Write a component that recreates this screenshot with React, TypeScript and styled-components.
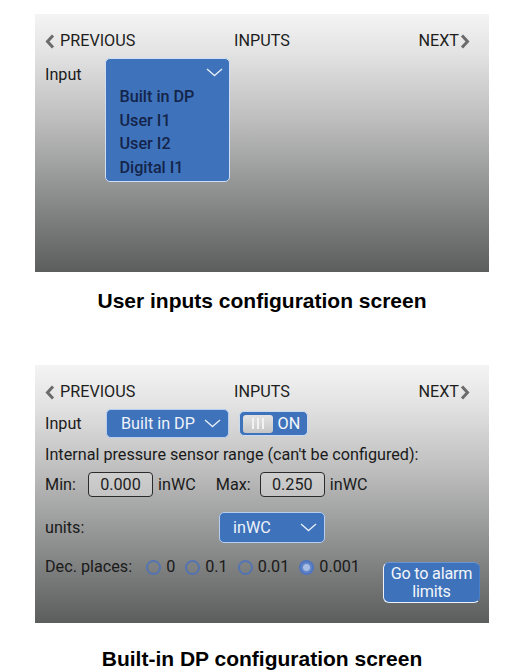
import React from 'react';
import styled, { createGlobalStyle } from 'styled-components';

const GlobalStyle = createGlobalStyle`
  html, body {
    margin: 0;
    padding: 0;
    background: #fff;
  }
  body {
    font-family: Roboto, "Liberation Sans", sans-serif;
  }
`;

const Page = styled.div`
  width: 517px;
  padding-top: 14px;
`;

const Screen = styled.div<{ $mt?: number }>`
  box-sizing: border-box;
  width: 454px;
  height: 258px;
  margin: ${p => p.$mt ?? 0}px 0 0 35px;
  padding: 17px 9px 0 10px;
  display: flex;
  flex-direction: column;
  background: linear-gradient(
    180deg,
    #f4f4f4 0%,
    #e3e3e3 15%,
    #bcbcbc 42%,
    #8d8e8e 70%,
    #5b5e5d 100%
  );
  font-family: Roboto, "Liberation Sans", sans-serif;
  font-size: 16.2px;
  line-height: 20px;
  color: #1a1a1a;
`;

const Caption = styled.div<{ $mt: number }>`
  width: 454px;
  margin: ${p => p.$mt}px 0 0 35px;
  text-align: center;
  font-family: "Liberation Sans", Arial, sans-serif;
  font-weight: bold;
  font-size: 21px;
  line-height: 24px;
  color: #000;
`;

const Header = styled.div`
  display: grid;
  grid-template-columns: 1fr auto 1fr;
  align-items: center;
  height: 20px;
  margin: 0 -9px 0 -10px;
  color: #1e1e1e;
`;

const NavLink = styled.div<{ $side: 'left' | 'right' }>`
  display: flex;
  align-items: center;
  gap: ${p => (p.$side === 'left' ? 5 : 1)}px;
  justify-self: ${p => (p.$side === 'left' ? 'start' : 'end')};
  margin: ${p => (p.$side === 'left' ? '0 0 0 10px' : '0 19px 0 0')};
`;

const Row = styled.div<{ $mt: number; $h?: number; $align?: string }>`
  display: flex;
  align-items: ${p => p.$align ?? 'center'};
  margin-top: ${p => p.$mt}px;
  height: ${p => (p.$h ? `${p.$h}px` : 'auto')};
`;

const Label = styled.div<{ $w?: number; $mt?: number }>`
  width: ${p => (p.$w ? `${p.$w}px` : 'auto')};
  flex-shrink: 0;
  margin-top: ${p => p.$mt ?? 0}px;
`;

const Unit = styled.div<{ $mr?: number }>`
  margin: 0 ${p => p.$mr ?? 0}px 0 5px;
`;

const OpenSelect = styled.div`
  box-sizing: border-box;
  width: 125px;
  height: 124px;
  background: #3e72ba;
  border: 1.5px solid #cfe0f5;
  border-radius: 5px;
  padding: 0 0 0 13.5px;
`;

const OpenTop = styled.div`
  height: 26px;
  display: flex;
  justify-content: flex-end;
  align-items: center;
  padding-right: 6px;
`;

const Option = styled.div`
  height: 23.5px;
  line-height: 23.5px;
  color: #14244a;
  font-weight: 500;
`;

const Select = styled.div<{ $w: number; $h: number; $pl: number }>`
  box-sizing: border-box;
  width: ${p => p.$w}px;
  height: ${p => p.$h}px;
  display: flex;
  align-items: center;
  justify-content: space-between;
  padding: 0 7px 0 ${p => p.$pl}px;
  background: #3e72ba;
  border: 1.5px solid #b6cff0;
  border-radius: 5px;
  color: #eef3fb;
`;

const Toggle = styled.div`
  box-sizing: border-box;
  width: 69px;
  height: 25px;
  margin-left: 10px;
  padding: 2.5px;
  display: flex;
  align-items: center;
  background: #3e72ba;
  border: 1.5px solid #c9dbf1;
  border-radius: 5px;
  color: #f4f7fc;
`;

const Knob = styled.div`
  width: 30px;
  height: 100%;
  display: flex;
  align-items: center;
  justify-content: center;
  gap: 3px;
  border-radius: 3px;
  background: linear-gradient(180deg, #e4e4e4, #c6c6c6);
`;

const KnobLine = styled.span`
  width: 2px;
  height: 11px;
  background: #f2f2f2;
`;

const ToggleText = styled.span`
  margin-left: 5px;
`;

const NumberBox = styled.div`
  box-sizing: border-box;
  width: 65px;
  height: 25px;
  display: flex;
  align-items: center;
  justify-content: center;
  border: 1.5px solid #2b2b2b;
  border-radius: 4px;
  background: rgba(255, 255, 255, 0.28);
  color: #1e1e1e;
`;

const RadioGroup = styled.div`
  display: flex;
  align-items: center;
  gap: 10px;
  margin-left: 14px;
  height: 20px;
`;

const RadioItem = styled.div`
  display: flex;
  align-items: center;
  gap: 5px;
`;

const RadioCircle = styled.span<{ $checked?: boolean }>`
  box-sizing: border-box;
  width: 15px;
  height: 15px;
  border-radius: 50%;
  border: 2px solid rgba(72, 112, 190, 0.8);
  background: ${p =>
    p.$checked
      ? 'radial-gradient(circle, #a7bde3 0 3px, #6486c6 4px)'
      : 'transparent'};
`;

const AlarmButton = styled.div`
  box-sizing: border-box;
  width: 97px;
  height: 41px;
  margin: 5px 0 0 auto;
  padding-top: 2px;
  background: #3e72ba;
  border: 1.5px solid;
  border-color: #6a95d4 #4d7fc4 #edf2f9 #edf2f9;
  border-radius: 6px;
  color: #f3f6fb;
  text-align: center;
  line-height: 18px;
  letter-spacing: -0.2px;
`;

const Chevron = ({ dir }: { dir: 'left' | 'right' }) => (
  <svg width="10" height="15" viewBox="0 0 10 15">
    <polyline
      points={dir === 'left' ? '8,1.5 2.5,7.5 8,13.5' : '2,1.5 7.5,7.5 2,13.5'}
      fill="none"
      stroke="#6b6b6b"
      strokeWidth="3"
    />
  </svg>
);

const DropArrow = () => (
  <svg width="17" height="9" viewBox="0 0 17 9">
    <polyline points="1,1 8.5,7.5 16,1" fill="none" stroke="#e3ecf8" strokeWidth="1.4" />
  </svg>
);

const ScreenHeader = () => (
  <Header>
    <NavLink $side="left">
      <Chevron dir="left" />
      PREVIOUS
    </NavLink>
    <div>INPUTS</div>
    <NavLink $side="right">
      NEXT
      <Chevron dir="right" />
    </NavLink>
  </Header>
);

const options = ['Built in DP', 'User I1', 'User I2', 'Digital I1'];
const decimals = ['0', '0.1', '0.01', '0.001'];

export default function App() {
  return (
    <Page>
      <GlobalStyle />
      <Screen>
        <ScreenHeader />
        <Row $mt={7} $align="flex-start">
          <Label $w={60} $mt={7}>Input</Label>
          <OpenSelect>
            <OpenTop>
              <DropArrow />
            </OpenTop>
            {options.map(o => (
              <Option key={o}>{o}</Option>
            ))}
          </OpenSelect>
        </Row>
      </Screen>
      <Caption $mt={17}>User inputs configuration screen</Caption>

      <Screen $mt={52}>
        <ScreenHeader />
        <Row $mt={7} $h={29}>
          <Label $w={61}>Input</Label>
          <Select $w={123} $h={29} $pl={14}>
            Built in DP
            <DropArrow />
          </Select>
          <Toggle>
            <Knob>
              <KnobLine />
              <KnobLine />
              <KnobLine />
            </Knob>
            <ToggleText>ON</ToggleText>
          </Toggle>
        </Row>
        <Row $mt={7}>Internal pressure sensor range (can't be configured):</Row>
        <Row $mt={7} $h={25}>
          <Label $w={43}>Min:</Label>
          <NumberBox>0.000</NumberBox>
          <Unit $mr={20}>inWC</Unit>
          <Label $w={44}>Max:</Label>
          <NumberBox>0.250</NumberBox>
          <Unit>inWC</Unit>
        </Row>
        <Row $mt={15} $h={31}>
          <Label $w={174}>units:</Label>
          <Select $w={106} $h={31} $pl={13}>
            inWC
            <DropArrow />
          </Select>
        </Row>
        <Row $mt={14} $align="flex-start">
          <Label>Dec. places:</Label>
          <RadioGroup>
            {decimals.map(d => (
              <RadioItem key={d}>
                <RadioCircle $checked={d === '0.001'} />
                {d}
              </RadioItem>
            ))}
          </RadioGroup>
          <AlarmButton>
            Go to alarm
            <br />
            limits
          </AlarmButton>
        </Row>
      </Screen>
      <Caption $mt={24}>Built-in DP configuration screen</Caption>
    </Page>
  );
}
